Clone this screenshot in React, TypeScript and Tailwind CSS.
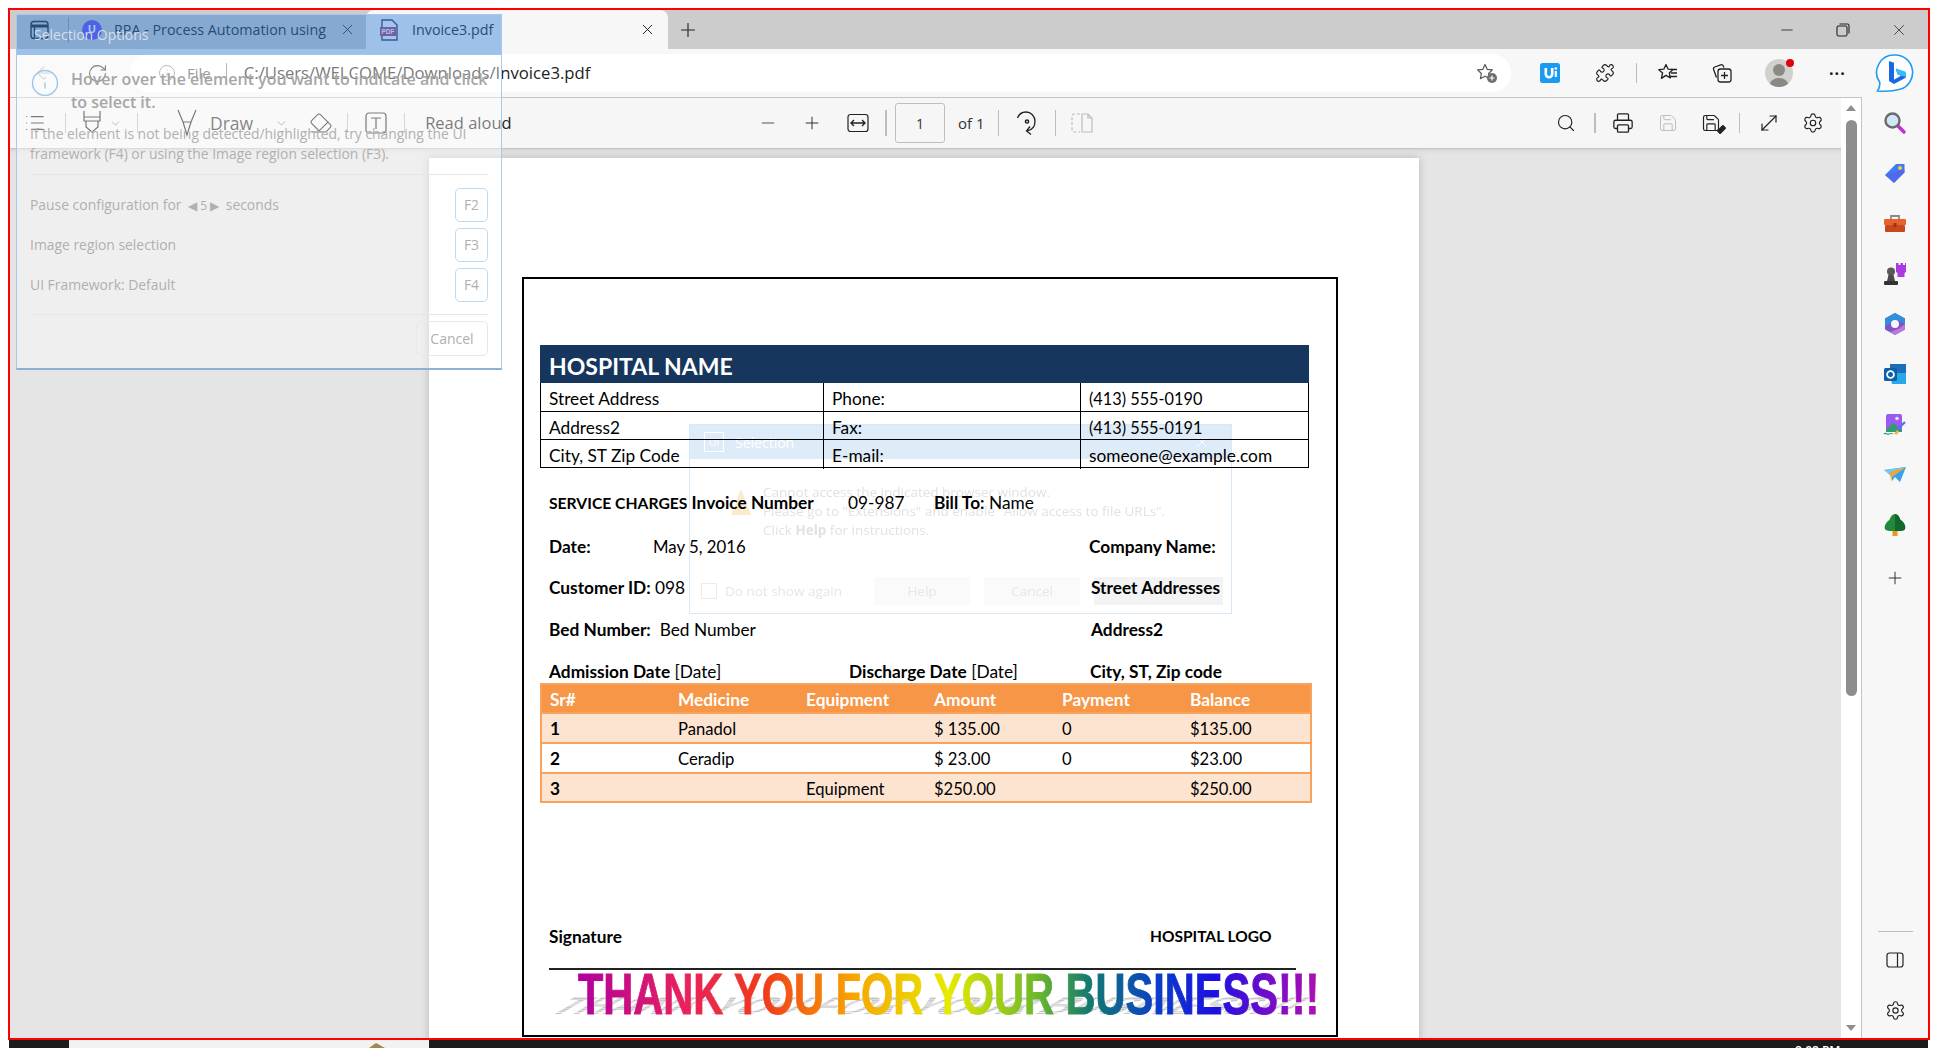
import { ArrowLeft, ChevronDown, Eraser, Info, List, Minus, MoveDiagonal, Plus, Printer, Puzzle, RotateCw, Save, Search, Settings, X } from "lucide-react";

const contactRows = [
  ["Street Address", "Phone:", "(413) 555-0190"],
  ["Address2", "Fax:", "(413) 555-0191"],
  ["City, ST Zip Code", "E-mail:", "someone@example.com"],
];

const chargeRows = [
  ["1", "Panadol", "", "$ 135.00", "0", "$135.00"],
  ["2", "Ceradip", "", "$ 23.00", "0", "$23.00"],
  ["3", "", "Equipment", "$250.00", "", "$250.00"],
];

const chargeHead = ["Sr#", "Medicine", "Equipment", "Amount", "Payment", "Balance"];

function Sep({ h = "h-[20px]" }: { h?: string }) {
  return <div className={`w-px bg-[#bdbdbd] ${h}`} />;
}

function StarPlus() {
  return (
    <svg width="22" height="22" viewBox="0 0 22 22" fill="none">
      <path d="M9 2.5l2.2 4.8 5.2.6-3.8 3.6 1 5.2L9 14.2l-4.6 2.5 1-5.2L1.6 7.9l5.2-.6z" stroke="#555" strokeWidth="1.2" strokeLinejoin="round" />
      <circle cx="16" cy="16" r="5" fill="#6e6e6e" />
      <path d="M16 13.5v5M13.5 16h5" stroke="#fff" strokeWidth="1.2" />
    </svg>
  );
}

function FavStar() {
  return (
    <svg width="22" height="22" viewBox="0 0 22 22" fill="none" stroke="#222" strokeWidth="1.3">
      <path d="M9 2.5l2 4.6 5 .5-3.7 3.3 1 5-4.3-2.5-4.6 3 1.2-5.4L1.8 7.7l5-.5z" strokeLinejoin="round" />
      <path d="M14 7.5h6M14 11h6M13 14.5h7" />
    </svg>
  );
}

function Collections() {
  return (
    <svg width="22" height="22" viewBox="0 0 22 22" fill="none" stroke="#222" strokeWidth="1.3">
      <path d="M5.5 15.5L2.6 7.5a2 2 0 0 1 1.2-2.5l6-2.2a2 2 0 0 1 2.5 1.1l.6 1.6" />
      <rect x="7" y="7" width="13" height="13" rx="2.5" />
      <path d="M13.5 10v7M10 13.5h7" />
    </svg>
  );
}

function BingBubble() {
  return (
    <svg width="40" height="40" viewBox="0 0 40 40" fill="none">
      <path d="M20 2a17.5 17.5 0 0 1 5 34.3C19 38 9 38.500 2.500 38 5 35 5 33 4.800 29.500A17.500 17.500 0 0 1 20 2z" fill="#fff" stroke="#1f9cf0" strokeWidth="1.6" />
      <path d="M14 8l5 1.800v17l7-4-3.300-1.600-2-5 10 3.500v5L19 31l-5-3z" fill="#1668e3" />
      <path d="M20.700 15.200l10 3.500v5L26 22.800l-3.300-1.600z" fill="#37bdf8" />
    </svg>
  );
}

function FitWidth() {
  return (
    <svg width="22" height="20" viewBox="0 0 22 20" fill="none" stroke="#222" strokeWidth="1.2">
      <rect x="1" y="1.500" width="20" height="17" rx="2.500" />
      <path d="M4 10h14M7 7l-3 3 3 3M15 7l3 3-3 3" strokeWidth="1.400" />
    </svg>
  );
}

function TwoPage() {
  return (
    <svg width="22" height="20" viewBox="0 0 22 20" fill="none" stroke="#bdbdbd" strokeWidth="1.200">
      <path d="M9 1H3a2 2 0 0 0-2 2v14a2 2 0 0 0 2 2h6" strokeDasharray="3 2" />
      <path d="M11 1h6l4 4v14h-10zM17 1v4h4" />
    </svg>
  );
}

function RotatePage() {
  return (
    <svg width="22" height="28" viewBox="0 0 22 28" fill="none" stroke="#222" strokeWidth="1.300">
      <path d="M1.500 9C3 5 6 3 10 3c5 0 9 4 9 9.500 0 5-3 8.500-8 9.500" />
      <path d="M14 17.500L10.500 22l4.500 3.500" />
      <circle cx="11" cy="12.500" r="1.600" strokeWidth="1.500" />
    </svg>
  );
}

function UiExtension() {
  return (
    <svg width="20" height="20" viewBox="0 0 20 20">
      <rect width="20" height="20" rx="2.500" fill="#1a9bf0" />
      <path d="M4.500 5v6a4.500 4.500 0 0 0 9 0V5h-2.600v6a1.900 1.900 0 0 1-3.800 0V5z" fill="#fff" />
      <circle cx="15.800" cy="5.500" r="1.300" fill="#fff" />
      <rect x="14.700" y="8" width="2.200" height="6" fill="#fff" />
    </svg>
  );
}

function PdfIcon() {
  return (
    <svg width="20" height="22" viewBox="0 0 20 22" fill="none">
      <path d="M3 1h10l5 5v15H3z" fill="#fff" stroke="#3a3f5c" strokeWidth="1.400" />
      <rect x="1" y="8" width="16" height="9" fill="#b5436e" />
      <text x="2.500" y="15" fontSize="6.500" fontWeight="700" fill="#fff" fontFamily="Liberation Sans, sans-serif">PDF</text>
    </svg>
  );
}

function SidebarIcon({ name }: { name: string }) {
  if (name === "search")
    return (
      <svg width="24" height="24" viewBox="0 0 24 24">
        <path d="M14 14l7 7" stroke="#c02fd8" strokeWidth="3.500" strokeLinecap="round" />
        <circle cx="9.500" cy="9.500" r="7" fill="#cfe8f7" stroke="#6b6b6b" strokeWidth="2.400" />
      </svg>
    );
  if (name === "tag")
    return (
      <svg width="24" height="24" viewBox="0 0 24 24">
        <path d="M2 14L13 3h8.500v8.500L11 22z" fill="#3f7df0" />
        <path d="M2 14l9 8 10.500-10.500V8z" fill="#5f55e8" opacity=".5" />
        <circle cx="17" cy="7" r="2" fill="#f6c945" />
      </svg>
    );
  if (name === "tools")
    return (
      <svg width="24" height="24" viewBox="0 0 24 24">
        <path d="M8 7V4h8v3" fill="none" stroke="#8a8a8a" strokeWidth="1.800" />
        <rect x="1" y="7" width="22" height="6" rx="1" fill="#e8632a" />
        <rect x="2" y="13" width="20" height="7" rx="1" fill="#c9471c" />
        <rect x="10.500" y="11" width="3" height="4" fill="#9c3414" />
      </svg>
    );
  if (name === "chess")
    return (
      <svg width="24" height="24" viewBox="0 0 24 24">
        <path d="M13 1h2.500v2h2V1H20v2h2V1h1v9l-1.500 1v4H14.500v-4L13 10z" fill="#a93be0" />
        <circle cx="8" cy="9.500" r="4" fill="#5a5a5a" />
        <path d="M5.500 13h5l1.500 6H4z" fill="#4a4a4a" />
        <rect x="1" y="19" width="14" height="4" rx="1" fill="#333" />
      </svg>
    );
  if (name === "office")
    return (
      <svg width="24" height="24" viewBox="0 0 24 24" fill="none">
        <path d="M12 1l10 5.500v11L12 23 2 17.500v-11z" fill="#7d55c9" />
        <path d="M12 1l10 5.500v5.500l-7-3.500-9 3.500-4 2v-7.500z" fill="#2f8fd8" />
        <path d="M22 12v5.500L12 23l-5-3 9-3.500z" fill="#b978dc" />
        <circle cx="12" cy="12" r="4" fill="#f7f7f7" />
      </svg>
    );
  if (name === "outlook")
    return (
      <svg width="24" height="24" viewBox="0 0 24 24">
        <rect x="7" y="2" width="16" height="9" fill="#1a6fb8" />
        <path d="M7 11h16v11H9z" fill="#28a8ea" />
        <rect x="1" y="6" width="13" height="13" rx="1.500" fill="#0f5fa8" />
        <circle cx="7.500" cy="12.500" r="3.400" fill="none" stroke="#fff" strokeWidth="1.800" />
      </svg>
    );
  if (name === "image")
    return (
      <svg width="24" height="24" viewBox="0 0 24 24">
        <rect x="3" y="1" width="16" height="18" rx="2" fill="#9a5cf0" />
        <path d="M3 17l7-7 9 7v2H3z" fill="#2f9e6a" />
        <circle cx="14" cy="5.500" r="1.800" fill="#f4d9ff" />
        <path d="M13 18l9-9" stroke="#5f6ef0" strokeWidth="2.400" />
        <path d="M11 21l3-4 2 1.500-2 3z" fill="#f2b136" />
        <path d="M1 21c2-2 3 1 5 0s2-1 4 0" stroke="#2f9e6a" strokeWidth="1.200" fill="none" />
      </svg>
    );
  if (name === "plane")
    return (
      <svg width="24" height="24" viewBox="0 0 24 24">
        <path d="M1 7l22-3-6 15-5-5-3 4v-6z" fill="#3aa0f0" />
        <path d="M1 7l22-3L9 14z" fill="#6fc8f8" />
        <path d="M7 9l16-5-14 10-1 5z" fill="#f2a51e" opacity=".9" />
      </svg>
    );
  return (
    <svg width="24" height="24" viewBox="0 0 24 24">
      <rect x="9.500" y="17" width="5" height="6" fill="#e89a1c" />
      <path d="M12 1c3 0 5 4 5.500 6C21 9 23 13 22 16c-1 2-5 2-10 2s-9 0-10-2c-1-3 1-7 4.500-9C7 5 9 1 12 1z" fill="#1f8a3a" />
      <path d="M12 1c3 0 5 4 5.500 6C21 9 23 13 22 16c-1 2-5 2-10 2z" fill="#12682c" />
    </svg>
  );
}

function PdfToolbar() {
  return (
    <div className="relative flex h-[51px] shrink-0 items-center border-b border-[#c4c4c4] bg-[#f6f6f6] text-[#333]">
      <div className="flex w-[55px] justify-center pr-[6px]"><List size={22} strokeWidth={1.300} color="#222" /></div>
      <Sep />
      <svg className="ml-[16px]" width="20" height="26" viewBox="0 0 20 26" fill="none" stroke="#222" strokeWidth="1.200">
        <path d="M2 1v10h16V1M2 7h16M4 11v6l6 5 6-5v-6" />
      </svg>
      <ChevronDown className="ml-[7px]" size={13} strokeWidth={1.200} color="#555" />
      <div className="ml-[15px]"><Sep /></div>
      <svg className="ml-[38px]" width="22" height="28" viewBox="0 0 22 28" fill="none" stroke="#222" strokeWidth="1.200">
        <path d="M2 1l5 12 4 13 4-13 5-12M7 13h8" />
      </svg>
      <span className="ml-[12px] text-[17.500px] text-[#333]">Draw</span>
      <ChevronDown className="ml-[22px]" size={13} strokeWidth={1.200} color="#555" />
      <Eraser className="ml-[21px] -scale-x-100" size={24} strokeWidth={1.100} color="#222" />
      <div className="ml-[14px]"><Sep /></div>
      <svg className="ml-[17px]" width="22" height="22" viewBox="0 0 22 22" fill="none" stroke="#222" strokeWidth="1.200">
        <rect x="1" y="1" width="20" height="20" rx="3" />
        <path d="M6 6h10M11 6v11" />
      </svg>
      <div className="ml-[17px]"><Sep /></div>
      <span className="ml-[20px] text-[16.500px] text-[#222]">Read aloud</span>

      <div className="absolute left-[748px] top-0 flex h-full items-center">
        <Minus size={20} strokeWidth={1.300} color="#555" />
        <Plus className="ml-[24px]" size={20} strokeWidth={1.100} color="#222" />
        <div className="ml-[25px]"><FitWidth /></div>
        <div className="ml-[16px]"><div className="h-[26px] w-[2px] bg-[#bdbdbd]" /></div>
        <div className="ml-[8px] flex h-[40px] w-[50px] items-center justify-center rounded-[3px] border border-[#bdbdbd] text-[14px]">1</div>
        <span className="ml-[13px] w-[40px] text-[15px]">of 1</span>
        <Sep h="h-[26px]" />
        <div className="ml-[17px]"><RotatePage /></div>
        <div className="ml-[17px]"><Sep h="h-[26px]" /></div>
        <div className="ml-[15px]"><TwoPage /></div>
      </div>

      <div className="absolute left-[1546px] top-0 flex h-full items-center">
        <Search size={20} strokeWidth={1.400} color="#222" />
        <div className="ml-[18px]"><div className="h-[20px] w-[2px] bg-[#bdbdbd]" /></div>
        <Printer className="ml-[16px]" size={22} strokeWidth={1.400} color="#222" />
        <Save className="ml-[24px]" size={20} strokeWidth={1.200} color="#bdbdbd" />
        <div className="relative ml-[23px]">
          <Save size={20} strokeWidth={1.400} color="#222" />
          <div className="absolute -bottom-[1px] -right-[3px] h-[9px] w-[5px] rotate-45 rounded-[1px] bg-[#222]" />
        </div>
        <div className="ml-[18px]"><Sep /></div>
        <MoveDiagonal className="ml-[17px]" size={24} strokeWidth={1.200} color="#222" />
        <Settings className="ml-[21px]" size={22} strokeWidth={1.300} color="#222" />
      </div>
    </div>
  );
}

function Invoice() {
  return (
    <div className="ml-[93px] h-[760px] w-[816px] border-2 border-black pl-[16px] font-['Lato',sans-serif] text-[17.300px] text-black">
      <div className="mt-[66px] w-[769px]">
        <div className="flex h-[38px] items-end bg-[#17365d] pb-[2px] pl-[9px] text-[23px] font-bold leading-[30px] text-white">HOSPITAL NAME</div>
        <div className="border-x border-b border-black">
          {contactRows.map((row, i) => (
            <div key={row[0]} className={`grid h-[28px] grid-cols-[282px_257px_1fr] items-center ${i > 0 ? "border-t border-black" : ""}`}>
              {row.map((cell, c) => (
                <div key={c} className={`flex h-full items-center pl-[8px] pt-[3px] ${c > 0 ? "border-l border-black" : ""} ${c === 2 && i < 2 ? "text-[16.300px]" : ""}`}>{cell}</div>
              ))}
            </div>
          ))}
        </div>
      </div>

      <div className="pl-[9px]">
        <div className="mt-[23px] flex h-[24px] items-center">
          <span className="w-[299px] whitespace-nowrap font-bold"><span className="text-[15.700px]">SERVICE CHARGES</span> Invoice Number</span>
          <span className="w-[86px]">09-987</span>
          <span><b>Bill To:</b> Name</span>
        </div>
        <div className="mt-[20px] flex h-[24px] items-center">
          <span className="w-[104px] font-bold">Date:</span>
          <span className="w-[436px] text-[16.800px]">May 5, 2016</span>
          <span className="font-bold">Company Name:</span>
        </div>
        <div className="mt-[17px] flex h-[24px] items-center">
          <span className="w-[542px]"><b>Customer ID:</b> 098</span>
          <span className="font-bold">Street Addresses</span>
        </div>
        <div className="mt-[18px] flex h-[24px] items-center">
          <span className="w-[542px]"><b>Bed Number:</b>&nbsp; Bed Number</span>
          <span className="font-bold">Address2</span>
        </div>
        <div className="mt-[18px] flex h-[24px] items-center">
          <span className="w-[300px]"><b>Admission Date</b> [Date]</span>
          <span className="w-[241px]"><b>Discharge Date</b> [Date]</span>
          <span className="font-bold">City, ST, Zip code</span>
        </div>
      </div>

      <div className="mt-[-1px] w-[772px] border-2 border-[#f9a25c]">
        <div className="grid h-[27px] grid-cols-[repeat(6,128px)] items-center bg-[#f79646] pl-[8px] pt-[2px] font-bold text-white">
          {chargeHead.map((h) => <span key={h}>{h}</span>)}
        </div>
        {chargeRows.map((row, i) => (
          <div key={row[0]} className={`grid grid-cols-[repeat(6,128px)] items-center border-t-2 border-[#f9a25c] pl-[8px] pt-[2px] ${i === 2 ? "h-[29px]" : "h-[30px]"} ${i === 1 ? "bg-white" : "bg-[#fde4d0]"}`}>
            {row.map((cell, c) => (
              <span key={c} className={c === 0 ? "font-bold" : "text-[16.600px]"}>{cell}</span>
            ))}
          </div>
        ))}
      </div>

      <div className="mt-[122px] flex h-[24px] items-center pl-[9px] font-bold">
        <span className="w-[601px]">Signature</span>
        <span className="text-[15.500px]">HOSPITAL LOGO</span>
      </div>
      <div className="ml-[9px] mt-[19px] h-[2px] w-[747px] bg-[#222]" />
      <div className="relative ml-[38px] mt-[2px] h-[50px] font-['Liberation_Sans',sans-serif] text-[58px] font-bold leading-[44px]">
        <span className="absolute left-[-3px] top-[24px] w-max origin-top-left scale-x-[0.716] scale-y-[0.42] skew-x-[-45deg] bg-[repeating-linear-gradient(180deg,#c8c8c8_0px,#c8c8c8_3px,#f0f0f0_3px,#f0f0f0_5px)] bg-clip-text text-transparent" aria-hidden="true">
          THANK YOU FOR YOUR BUSINESS!!!
        </span>
        <span className="absolute left-0 top-0 w-max origin-top-left scale-x-[0.716] bg-[linear-gradient(90deg,#b0009f_0%,#e8205f_14%,#f03a1c_25%,#f8a400_37%,#e6ea00_50%,#6cb82a_62%,#137a70_69%,#0a3fc8_78%,#1c10e0_86%,#7a0cc8_94%,#b010b0_100%)] bg-clip-text text-transparent [-webkit-text-stroke:1px_transparent]">
          THANK YOU FOR YOUR BUSINESS!!!
        </span>
      </div>
    </div>
  );
}

function SelectionOptions() {
  return (
    <div className="absolute left-[16px] top-[14px] flex h-[356px] w-[486px] flex-col border border-b-2 border-[#a9c7e6] border-b-[#8fb0d0] font-['Open_Sans',sans-serif]">
      <div className="flex h-[40px] shrink-0 items-center bg-[#2f7fd8]/45 pb-[1px] pl-[17px] text-[14px] text-[#d5dfea]">Selection Options</div>
      <div className="flex-1 bg-white/40">
        <div className="flex px-[13px] pt-[13px]">
          <Info size={30} strokeWidth={1.100} color="#9cc4ee" />
          <div className="ml-[11px] text-[16px] font-semibold leading-[23px] text-[#a6a6a6]">Hover over the element you want to indicate and click<br />to select it.</div>
        </div>
        <div className="ml-[13px] mt-[10px] w-[458px] border-b border-[#e6e6e6] pb-[10px] text-[13.900px] leading-[20px] text-[#b0b0b0]">
          If the element is not being detected/highlighted, try changing the UI<br />framework (F4) or using the Image region selection (F3).
        </div>
        <div className="ml-[13px] flex w-[458px] flex-col gap-[6px] pt-[13px] text-[13.900px] text-[#b0b0b0]">
          {[
            <>Pause configuration for <span className="mx-[3px] text-[12px]">◀ 5 ▶</span> seconds</>,
            <>Image region selection</>,
            <>UI Framework: Default</>,
          ].map((label, i) => (
            <div key={i} className="flex h-[34px] items-center justify-between">
              <span>{label}</span>
              <span className="flex h-[34px] w-[33px] items-center justify-center rounded-[5px] border border-[#bcdcf5] text-[#b0b0b0]">{`F${i + 2}`}</span>
            </div>
          ))}
        </div>
        <div className="ml-[13px] mt-[12px] w-[458px] border-t border-[#e6e6e6] pt-[6px]">
          <div className="ml-auto flex h-[35px] w-[72px] items-center justify-center rounded-[5px] border border-[#e8e8e8] text-[14px] text-[#b0b0b0]">Cancel</div>
        </div>
      </div>
    </div>
  );
}

function SelectionDialog() {
  return (
    <div className="absolute left-[689px] top-[424px] h-[190px] w-[543px] border border-[#d8e8f7] font-['Open_Sans',sans-serif] mix-blend-multiply">
      <div className="flex h-[34px] items-center justify-between bg-[#deebf9] pl-[14px] pr-[20px] text-[14px] text-white">
        <div className="flex items-center">
          <span className="flex h-[20px] w-[20px] items-center justify-center border border-white text-[11px]">Ui</span>
          <span className="ml-[11px]">Selection</span>
        </div>
        <X size={18} strokeWidth={1} color="#ffffff" />
      </div>
      <div className="flex pl-[40px] pt-[24px] text-[13.500px] leading-[19px] text-[#e2e2e2]">
        <svg className="mt-[4px]" width="22" height="30" viewBox="0 0 22 30"><path d="M11 2l10 26H1z" fill="#fbeacb" /></svg>
        <div className="ml-[11px]">
          Cannot access the indicated browser window.<br />
          Please go to "Extensions" and enable "Allow access to file URLs".<br />
          Click <b>Help</b> for instructions.
        </div>
      </div>
      <div className="ml-[11px] mt-[37px] flex items-center text-[13.500px] text-[#e6e6e6]">
        <span className="h-[16px] w-[16px] border border-[#ececec]" />
        <span className="ml-[8px] w-[149px]">Do not show again</span>
        <span className="flex h-[28px] w-[96px] items-center justify-center bg-[#fafafa]">Help</span>
        <span className="ml-[14px] flex h-[28px] w-[96px] items-center justify-center bg-[#fafafa]">Cancel</span>
        <span className="ml-[14px] h-[28px] w-[129px] bg-[#f3f3f3]" />
      </div>
    </div>
  );
}

export default function App() {
  return (
    <div className="relative h-[1048px] w-[1938px] overflow-hidden bg-white pl-[8px] pt-[8px] font-['Open_Sans',sans-serif]">
      <div className="flex h-[1032px] w-[1922px] flex-col border-2 border-[#ff0000] bg-[#f7f7f7]">
        {/* Tab strip */}
        <div className="flex h-[39px] shrink-0 items-center bg-[#cccccc] text-[14.300px] text-[#222]">
          <svg className="ml-[20px]" width="19" height="20" viewBox="0 0 19 20" fill="none" stroke="#222" strokeWidth="1.400">
            <rect x="1" y="1.500" width="17" height="17" rx="3" />
            <path d="M1 6h17" strokeWidth="3" />
            <path d="M4.500 6v12" />
          </svg>
          <div className="ml-[19px] h-[26px] w-px bg-[#999]" />
          <div className="ml-[13px] flex h-[20px] w-[20px] items-center justify-center rounded-full bg-[#6a4cf0] text-[11px] font-bold text-white">U</div>
          <span className="ml-[12px] w-[212px] overflow-hidden whitespace-nowrap">RPA - Process Automation using</span>
          <X className="ml-[13px]" size={17} strokeWidth={1.300} color="#222" />
          <div className="ml-[10px] flex h-[39px] w-[302px] items-center rounded-t-[8px] bg-[#f7f7f7]">
            <div className="ml-[13px]"><PdfIcon /></div>
            <span className="ml-[13px] w-[227px]">Invoice3.pdf</span>
            <X size={17} strokeWidth={1.300} color="#111" />
          </div>
          <Plus className="ml-[9px]" size={22} strokeWidth={1.200} color="#222" />
          <div className="ml-auto flex items-center pr-[20px]">
            <Minus size={18} strokeWidth={1.100} color="#222" />
            <svg className="ml-[40px]" width="14" height="14" viewBox="0 0 14 14" fill="none" stroke="#222" strokeWidth="1.100">
              <rect x="1" y="3" width="10" height="10" rx="1.500" />
              <path d="M3.500 1h8a1.500 1.500 0 0 1 1.500 1.500v8" />
            </svg>
            <X className="ml-[40px]" size={18} strokeWidth={1} color="#222" />
          </div>
        </div>

        {/* Address row */}
        <div className="flex h-[48px] shrink-0 items-center bg-[#f7f7f7]">
          <ArrowLeft className="ml-[23px]" size={22} strokeWidth={1.100} color="#b8b8b8" />
          <RotateCw className="ml-[32px]" size={21} strokeWidth={1.200} color="#222" />
          <div className="ml-[22px] flex h-[38px] w-[1381px] items-center rounded-full bg-white text-[#222]">
            <Info className="ml-[28px]" size={18} strokeWidth={1.100} color="#777" />
            <span className="ml-[11px] text-[15px] text-[#555]">File</span>
            <div className="ml-[15px] h-[20px] w-px bg-[#888]" />
            <span className="ml-[17px] text-[16.700px]">C:/Users/WELCOME/Downloads/Invoice3.pdf</span>
            <div className="ml-auto mr-[13px]"><StarPlus /></div>
          </div>
          <div className="ml-[29px]"><UiExtension /></div>
          <Puzzle className="ml-[35px]" size={20} strokeWidth={1.400} color="#222" />
          <div className="ml-[21px] h-[20px] w-px bg-[#bdbdbd]" />
          <div className="ml-[20px]"><FavStar /></div>
          <div className="ml-[32px]"><Collections /></div>
          <div className="relative ml-[32px] flex h-[28px] w-[28px] items-end justify-center overflow-hidden rounded-full bg-[#d2d0cc]">
            <div className="absolute left-[8px] top-[5px] h-[12px] w-[12px] rounded-full bg-[#8b8985]" />
            <div className="h-[9px] w-[20px] rounded-t-full bg-[#8b8985]" />
          </div>
          <div className="absolute left-[1786px] top-[59px] h-[8px] w-[8px] rounded-full bg-[#e3000f]" />
          <span className="ml-[36px] text-[16px] font-bold tracking-[1px] text-[#222]">···</span>
          <div className="ml-[29px]"><BingBubble /></div>
        </div>

        <div className="flex min-h-0 flex-1">
          <div className="flex w-[1852px] border-r border-t border-[#c4c4c4]">
            <div className="flex w-[1831px] flex-col">
              <PdfToolbar />
              <div className="min-h-0 flex-1 overflow-hidden bg-[#e5e5e5] pl-[419px] pt-[9px] shadow-[inset_0_6px_6px_-6px_#c8c8c8]">
                <div className="h-[900px] w-[990px] bg-white pt-[119px] shadow-[0_0_8px_#b5b5b5]">
                  <Invoice />
                </div>
              </div>
            </div>
            {/* Scrollbar */}
            <div className="relative flex w-[20px] flex-col items-center bg-white">
              <div className="mt-[7px] h-0 w-0 border-x-[5px] border-b-[6px] border-x-transparent border-b-[#8e8e8e]" />
              <div className="mt-[9px] h-[576px] w-[11px] rounded-full bg-[#8e8e8e]" />
              <div className="mb-[7px] mt-auto h-0 w-0 border-x-[5px] border-t-[6px] border-x-transparent border-t-[#8e8e8e]" />
            </div>
          </div>

          {/* Edge sidebar */}
          <div className="flex w-[66px] flex-col items-center pt-[14px]">
            <div className="flex flex-col items-center gap-[26.300px]">
              {["search", "tag", "tools", "chess", "office", "outlook", "image", "plane", "tree"].map((name) => (
                <SidebarIcon key={name} name={name} />
              ))}
            </div>
            <Plus className="mt-[31px]" size={20} strokeWidth={1.100} color="#222" />
            <div className="mt-auto h-px w-[35px] bg-[#bdbdbd]" />
            <svg className="mt-[20px]" width="18" height="16" viewBox="0 0 18 16" fill="none" stroke="#222" strokeWidth="1.200">
              <rect x="1" y="1" width="16" height="14" rx="2.500" />
              <path d="M11.500 1v14" />
            </svg>
            <Settings className="mb-[17px] mt-[32px]" size={21} strokeWidth={1.300} color="#222" />
          </div>
        </div>
      </div>

      {/* Taskbar sliver */}
      <div className="absolute bottom-0 left-[9px] flex h-[8px] w-[1919px] bg-[#1c1c1c]">
        <div className="relative ml-[60px] h-full w-[360px] bg-[#f2f2f2]">
          <svg className="absolute left-[298px] top-[3px]" width="20" height="5" viewBox="0 0 20 5"><path d="M2 5l7-5 9 5z" fill="#a08650" /></svg>
        </div>
        <span className="absolute left-[1786px] top-[5px] text-[12px] font-semibold leading-none text-white">8:08 PM</span>
      </div>

      <SelectionDialog />
      <SelectionOptions />
    </div>
  );
}
